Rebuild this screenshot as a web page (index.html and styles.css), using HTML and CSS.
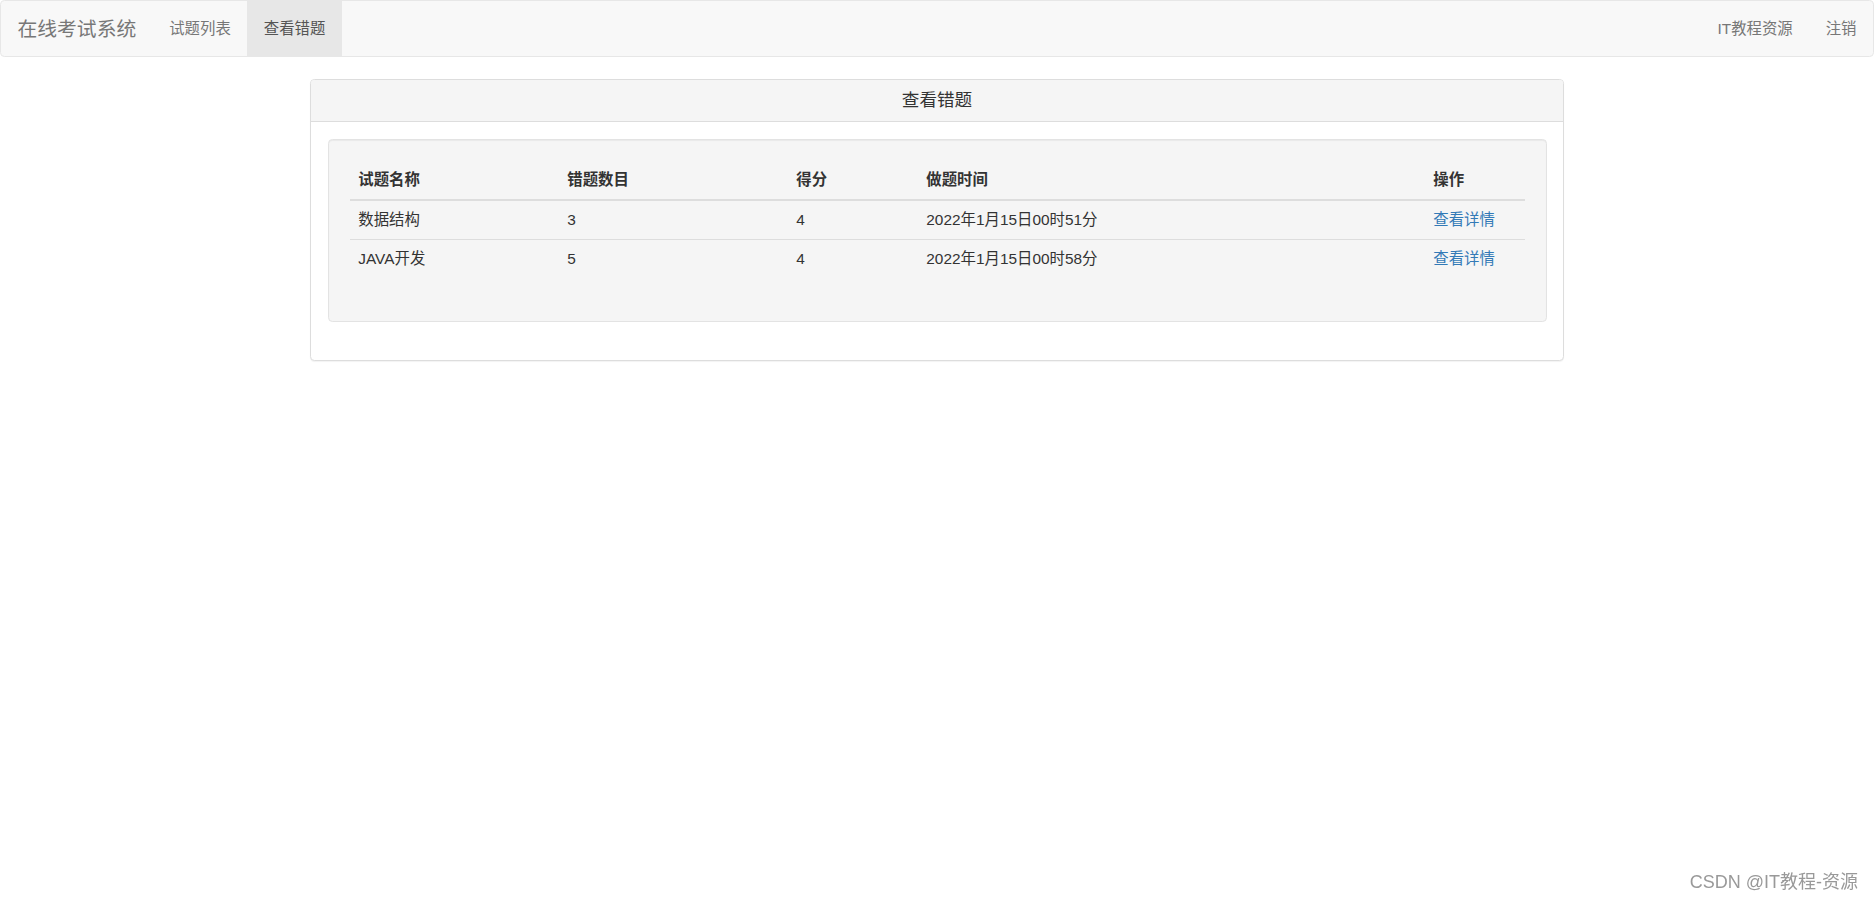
FILE: index.html
```html
<!DOCTYPE html>
<html lang="zh-CN">

<head>
  <meta charset="UTF-8">
  <meta name="viewport" content="width=device-width, initial-scale=1.0">
  <title>查看错题 | 在线考试系统</title>
  <link rel="stylesheet" href="styles.css">
</head>

<body>

  <!-- Top Navigation -->
  <nav class="navbar">
    <div class="navbar-left">
      <a class="navbar-brand" href="#">在线考试系统</a>
      <ul class="nav">
        <li><a href="#">试题列表</a></li>
        <li class="active"><a href="#">查看错题</a></li>
      </ul>
    </div>
    <ul class="nav">
      <li><a href="#">IT教程资源</a></li>
      <li><a href="#">注销</a></li>
    </ul>
  </nav>

  <div class="container">
    <div class="panel">
      <div class="panel-heading">
        <h3 class="panel-title">查看错题</h3>
      </div>
      <div class="panel-body">
        <div class="well">
          <table class="table">
            <thead>
              <tr>
                <th class="col-name">试题名称</th>
                <th class="col-count">错题数目</th>
                <th class="col-score">得分</th>
                <th class="col-time">做题时间</th>
                <th>操作</th>
              </tr>
            </thead>
            <tbody>
              <tr>
                <td>数据结构</td>
                <td>3</td>
                <td>4</td>
                <td>2022年1月15日00时51分</td>
                <td><a href="#">查看详情</a></td>
              </tr>
              <tr>
                <td>JAVA开发</td>
                <td>5</td>
                <td>4</td>
                <td>2022年1月15日00时58分</td>
                <td><a href="#">查看详情</a></td>
              </tr>
            </tbody>
          </table>
        </div>
      </div>
    </div>
  </div>

  <div class="watermark">CSDN @IT教程-资源</div>

</body>

</html>
```

FILE: styles.css
```css
* {
  box-sizing: border-box;
}

body {
  margin: 0;
  font-family: "Liberation Sans", Arial, "Noto Sans CJK SC", sans-serif;
  font-size: 15.4px;
  line-height: 22px;
  color: #333;
  background: #fff;
}

a {
  color: #337ab7;
  text-decoration: none;
}

/* Navbar */
.navbar {
  display: flex;
  justify-content: space-between;
  min-height: 57px;
  margin-bottom: 22px;
  background-color: #f8f8f8;
  border: 1px solid #e7e7e7;
  border-radius: 4.4px;
}

.navbar-left {
  display: flex;
}

.navbar-brand {
  display: block;
  height: 55px;
  padding: 16.5px;
  font-size: 19.8px;
  line-height: 22px;
  color: #777;
}

.nav {
  display: flex;
  margin: 0;
  padding: 0;
  list-style: none;
}

.nav a {
  display: block;
  padding: 16.5px;
  line-height: 22px;
  color: #777;
}

.nav .active a {
  background-color: #e7e7e7;
  color: #555;
}

/* Content */
.container {
  width: 1254px;
  margin: 0 auto;
}

.panel {
  margin-bottom: 22px;
  background-color: #fff;
  border: 1px solid #ddd;
  border-radius: 4.4px;
  box-shadow: 0 1px 1px rgba(0, 0, 0, 0.05);
}

.panel-heading {
  padding: 11px 16.5px;
  background-color: #f5f5f5;
  border-bottom: 1px solid #ddd;
  border-radius: 3.3px 3.3px 0 0;
  text-align: center;
}

.panel-title {
  margin: 0;
  font-size: 17.6px;
  font-weight: normal;
  line-height: 1.1;
  color: #333;
}

.panel-body {
  padding: 16.5px;
}

.well {
  padding: 21px;
  margin-bottom: 22px;
  background-color: #f5f5f5;
  border: 1px solid #e3e3e3;
  border-radius: 4.4px;
  box-shadow: inset 0 1px 1px rgba(0, 0, 0, 0.05);
}

/* Table */
.table {
  width: 100%;
  margin-bottom: 22px;
  border-collapse: collapse;
  border-spacing: 0;
}

.table th,
.table td {
  padding: 8px 8.8px;
  line-height: 22px;
  text-align: left;
  vertical-align: top;
  border-top: 1px solid #ddd;
}

.table thead th {
  border-top: 0;
  border-bottom: 2px solid #ddd;
  vertical-align: bottom;
  font-weight: bold;
}

.table tbody tr:first-child td {
  border-top: 0;
}

.col-name {
  width: 209px;
}

.col-count {
  width: 229px;
}

.col-score {
  width: 130px;
}

.col-time {
  width: 507px;
}

/* Watermark */
.watermark {
  position: fixed;
  right: 16px;
  bottom: 9px;
  font-size: 18px;
  line-height: 20px;
  color: #999;
  text-shadow: 0 0 1px #fff;
}
```
